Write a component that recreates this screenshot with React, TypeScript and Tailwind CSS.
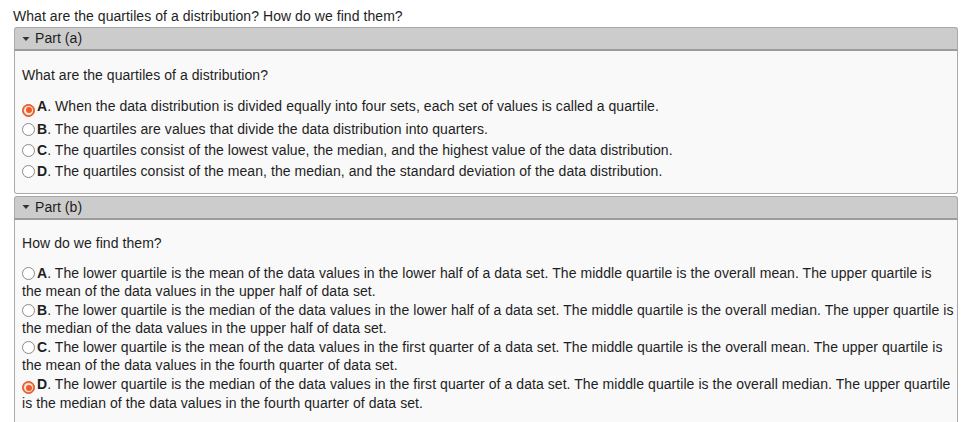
import React from "react";

function Radio({ checked }: { checked?: boolean }) {
  if (checked) {
    return (
      <span className="inline-flex items-center justify-center w-[13px] h-[13px] rounded-full bg-[#f07040] border border-[#d8562a] align-[-2px] mr-[2px]">
        <span className="w-[9px] h-[9px] rounded-full bg-[#fde6dc] flex items-center justify-center">
          <span className="w-[6px] h-[6px] rounded-full bg-[#ee5a28]" />
        </span>
      </span>
    );
  }
  return (
    <span className="inline-block w-[13px] h-[13px] rounded-full bg-white border border-[#8a8a8a] align-[-2px] mr-[2px]" />
  );
}

function Option({ letter, text, checked }: { letter: string; text: string; checked?: boolean }) {
  return (
    <div className="leading-[18px] mb-[1px]">
      <Radio checked={checked} />
      <span className="font-bold">{letter}</span>. {text}
    </div>
  );
}

function Header({ label }: { label: string }) {
  return (
    <div className="h-[24px] bg-[#cccccc] border border-[#a9a9a9] border-b-2 border-b-[#9c9c9c] rounded-t-[3px] flex items-center pl-[7px] gap-[5px]">
      <svg width="8" height="6" viewBox="0 0 8 6">
        <path d="M0.5 1 L7.5 1 L4 5 Z" fill="#333" />
      </svg>
      <span>{label}</span>
    </div>
  );
}

export default function App() {
  return (
    <div className="bg-white w-[962px] h-[422px] overflow-hidden pt-[8px] pl-[14px] pr-[4px] text-[14px] tracking-[0.06px] text-[#1e1e1e] font-['Liberation_Sans',Arial,sans-serif]">
      <div className="leading-[16px] -ml-[1px]">What are the quartiles of a distribution? How do we find them?</div>
      <div className="mt-[3px]">
        <Header label="Part (a)" />
        <div className="bg-[#f9f9f9] border border-t-0 border-[#ababab] rounded-b-[3px] px-[7px] pt-[15px] pb-[10px]">
          <div className="leading-[18px]">What are the quartiles of a distribution?</div>
          <div className="mt-[13px] [&>div]:mb-[3px]">
            <Option checked letter="A" text="When the data distribution is divided equally into four sets, each set of values is called a quartile." />
            <Option letter="B" text="The quartiles are values that divide the data distribution into quarters." />
            <Option letter="C" text="The quartiles consist of the lowest value, the median, and the highest value of the data distribution." />
            <Option letter="D" text="The quartiles consist of the mean, the median, and the standard deviation of the data distribution." />
          </div>
        </div>
      </div>
      <div className="mt-[2px]">
        <Header label="Part (b)" />
        <div className="bg-[#f9f9f9] border border-t-0 border-[#ababab] pl-[7px] pt-[14px] pb-[20px] pr-[3px]">
          <div className="leading-[18px]">How do we find them?</div>
          <div className="mt-[12px]">
            <Option letter="A" text="The lower quartile is the mean of the data values in the lower half of a data set. The middle quartile is the overall mean. The upper quartile is the mean of the data values in the upper half of data set." />
            <Option letter="B" text="The lower quartile is the median of the data values in the lower half of a data set. The middle quartile is the overall median. The upper quartile is the median of the data values in the upper half of data set." />
            <Option letter="C" text="The lower quartile is the mean of the data values in the first quarter of a data set. The middle quartile is the overall mean. The upper quartile is the mean of the data values in the fourth quarter of data set." />
            <Option checked letter="D" text="The lower quartile is the median of the data values in the first quarter of a data set. The middle quartile is the overall median. The upper quartile is the median of the data values in the fourth quarter of data set." />
          </div>
        </div>
      </div>
    </div>
  );
}
